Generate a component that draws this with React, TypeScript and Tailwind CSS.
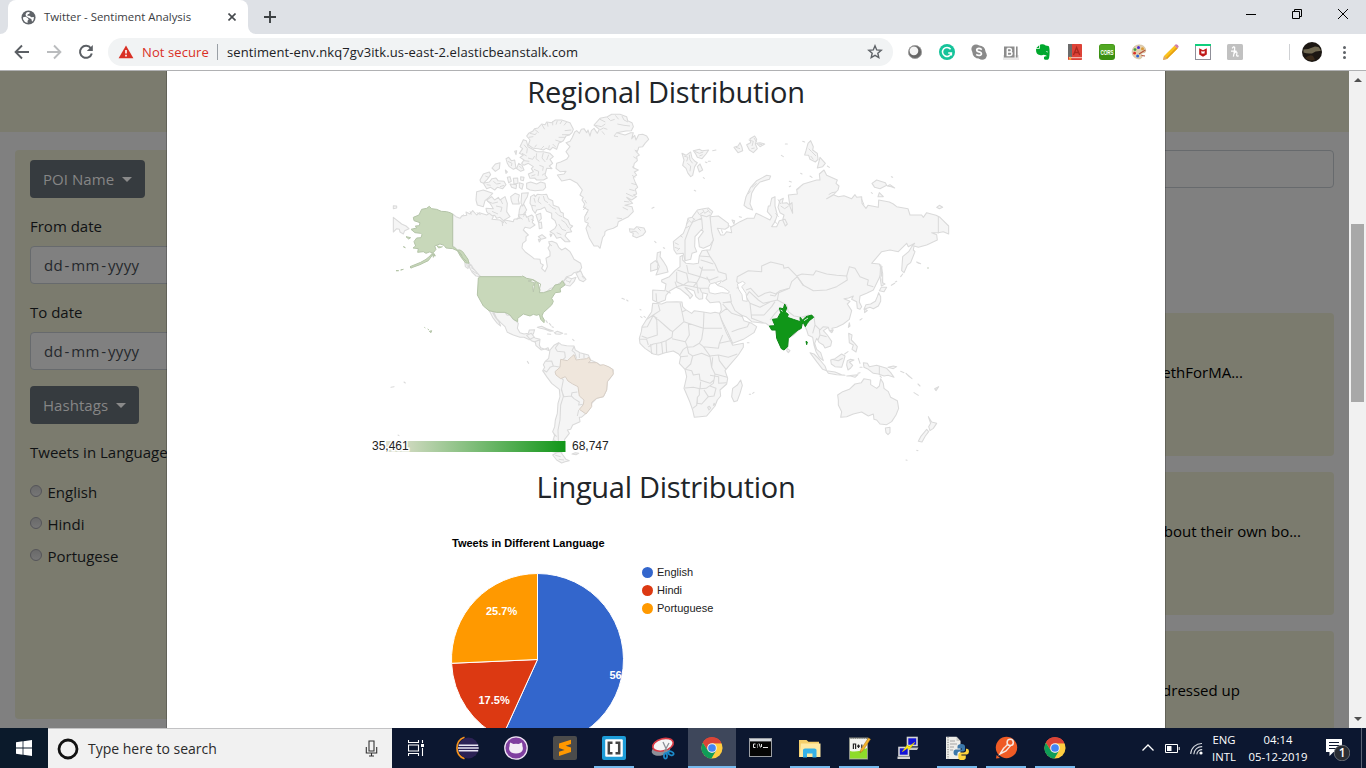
import type { ReactNode } from "react";

/* ---------- small helpers ---------- */

function Svg({ s = 16, box = "0 0 16 16", children }: { s?: number; box?: string; children: ReactNode }) {
  return (
    <svg width={s} height={s} viewBox={box} fill="none" className="block shrink-0">
      {children}
    </svg>
  );
}

function ChromeLogo({ s = 22 }: { s?: number }) {
  return (
    <Svg s={s} box="0 0 24 24">
      <circle cx="12" cy="12" r="11.5" fill="#ffcd40" />
      <path d="M12 12 L2 6.2 A11.5 11.5 0 0 1 22 6.2 L21.7 6.8 H12Z" fill="#db4437" />
      <path d="M12 12 L12 6.8 H22.3 A11.5 11.5 0 0 0 2 6.2 L7.4 14.6Z" fill="#db4437" />
      <path d="M2 6.2 A11.5 11.5 0 0 0 11.4 23.5 L16.5 14.7 L12 17.2 L7.4 14.6Z" fill="#0f9d58" />
      <circle cx="12" cy="12" r="5.3" fill="#f1f1f1" />
      <circle cx="12" cy="12" r="4.2" fill="#4285f4" />
    </Svg>
  );
}

/* ---------- browser chrome ---------- */

function TabStrip() {
  return (
    <div className="flex h-[34px] bg-[#dee1e6] text-[#3c4043]">
      <div className="flex h-full w-2 items-end bg-white">
        <div className="h-full w-2 rounded-br-lg bg-[#dee1e6]" />
      </div>
      <div className="flex w-60 items-center rounded-t-lg bg-white bg-clip-padding pl-[13px] pr-3">
        <Svg s={15}>
          <circle cx="8" cy="8" r="7.5" fill="#5f6368" />
          <path d="M2.2 7.6 L5 7.2 L7.2 8.4 L8.2 10.2 L7 11.4 V13.8 Q3.4 13 2.2 9.8Z M6.2 2.4 L9.2 2.2 L9 4 L7.2 4.6 L6.8 6 L9 6.2 L11 7.8 L13.8 7.4 Q14 10.6 11.8 12.4 L11 9.6 L8.6 8.6 L5.4 6.6 L4.8 4.4Z" fill="#fff" />
        </Svg>
        <div className="ml-2 flex-1 whitespace-nowrap text-[11.4px] leading-4">Twitter - Sentiment Analysis</div>
        <Svg s={8} box="0 0 8 8">
          <path d="M.5 .5 L7.5 7.5 M7.5 .5 L.5 7.5" stroke="#45494d" strokeWidth="1.6" />
        </Svg>
      </div>
      <div className="h-full w-2 bg-white">
        <div className="h-full w-2 rounded-bl-lg bg-[#dee1e6]" />
      </div>
      <div className="ml-2 flex items-center">
        <Svg s={12} box="0 0 12 12">
          <path d="M6 0 V12 M0 6 H12" stroke="#3c4043" strokeWidth="1.9" />
        </Svg>
      </div>
      <div className="ml-auto flex h-7 items-center gap-9 pr-[18px]">
        <Svg s={10} box="0 0 10 10">
          <path d="M0 5.5 H10" stroke="#000" />
        </Svg>
        <Svg s={10} box="0 0 10 10">
          <path d="M.5 2.5 H7.5 V9.5 H.5Z M2.5 2.5 V.5 H9.5 V7.5 H7.5" stroke="#000" />
        </Svg>
        <Svg s={10} box="0 0 10 10">
          <path d="M0 0 L10 10 M10 0 L0 10" stroke="#000" />
        </Svg>
      </div>
    </div>
  );
}

function Extensions() {
  return (
    <div className="ml-[14px] flex items-center gap-4">
      <Svg>
        <circle cx="8" cy="8" r="6.8" fill="#666" />
        <circle cx="6.9" cy="6.8" r="4.4" fill="#f4f4f4" />
        <circle cx="8" cy="8" r="6.5" stroke="#aaa" strokeWidth=".7" />
      </Svg>
      <Svg>
        <circle cx="8" cy="8" r="8" fill="#15c39a" />
        <path d="M11.6 5.2 A4.5 4.5 0 1 0 12.4 8.9 H9.2 M12.4 8.9 V11.4" stroke="#fff" strokeWidth="1.5" />
      </Svg>
      <Svg>
        <circle cx="5" cy="5" r="4.6" fill="#8a8a8a" />
        <circle cx="11.2" cy="11.2" r="4.6" fill="#8a8a8a" />
        <circle cx="8" cy="8" r="6.6" fill="#8a8a8a" />
        <path d="M10.8 5.6 Q8 3.6 5.9 5.2 Q5 7.2 8 7.9 Q11 8.6 10.3 10.5 Q8.6 12.4 5.2 10.4" stroke="#fff" strokeWidth="1.7" />
      </Svg>
      <Svg>
        <path d="M0 11 H16 V16 H0Z" fill="#e9e9e9" />
        <rect x="1" y="2.5" width="10.5" height="11" fill="#8c8c8c" />
        <path d="M4.3 4.5 V11.5 H7.2 Q9 11.3 9 9.7 Q9 8 7.2 8 H4.3 M4.3 4.5 H7 Q8.5 4.7 8.5 6.2 Q8.5 7.8 7 8" stroke="#fff" strokeWidth="1.5" />
        <path d="M13.8 2.5 V13.5" stroke="#8c8c8c" strokeWidth="1.6" />
      </Svg>
      <Svg>
        <path d="M5 .8 Q5.5 0 8 .3 Q10 .8 10.6 1.4 L13.4 2 Q14.6 2.6 14.6 8 Q14.6 15.6 12.6 15.8 L9.8 15.8 Q8.6 14.8 9 13.2 Q9.6 12 11.4 12.4 V11.4 L8.8 10.8 Q7.4 11.6 4.8 11 Q1 10.6 1 5.8 L1.2 4.8 H4.6 Q5.2 4.6 5 .8Z M4.2 1.2 V4 H1.4Z" fill="#00a82d" />
        <path d="M10.8 7.6 Q12 6.7 12.8 7.8 L12.6 8.5Z" fill="#fff" />
      </Svg>
      <Svg>
        <rect x="1" y="0" width="14" height="16" rx=".8" fill="#dd4237" />
        <rect x="1" y="0" width="4" height="13" fill="#6b6b6b" />
        <path d="M2 13.7 H15" stroke="#f7d0c8" strokeWidth="1" />
        <path d="M6.5 11 L9.6 3.5 L12.7 11 M7.5 8.5 H11.7" stroke="#a9281f" strokeWidth="1.3" />
        <path d="M3 12 L4.5 15.6 L2 16Z" fill="#ffb52b" />
      </Svg>
      <Svg>
        <rect width="16" height="16" rx="3" fill="#3a8f12" />
        <rect x=".5" y=".5" width="15" height="8" rx="2.5" fill="#52a823" />
        <text x="1.4" y="10.6" fontFamily="Liberation Sans, Arial, sans-serif" fontSize="7" fontWeight="bold" fill="#fff" textLength="13.2" lengthAdjust="spacingAndGlyphs">
          CORS
        </text>
      </Svg>
      <Svg>
        <path d="M8 .8 Q14.5 1 14.8 7 Q14.6 9 11.6 9 Q9.6 9.4 11 11.4 Q11.6 14.6 8 15 Q1.4 14.2 1 8 Q1.6 1.4 8 .8Z" fill="#e3cfae" stroke="#c2ae8c" strokeWidth=".5" />
        <circle cx="7.5" cy="3.5" r="1.5" fill="#4b2bd0" />
        <circle cx="11.5" cy="4.8" r="1.5" fill="#d99a3a" />
        <circle cx="4" cy="5.6" r="1.4" fill="#3f9e3f" />
        <circle cx="3.6" cy="9.2" r="1.4" fill="#d9342b" />
        <circle cx="6.6" cy="12" r="1.5" fill="#2a62d9" />
        <path d="M8 10 L14.4 6 M10.5 11.5 L14 12" stroke="#b5523b" strokeWidth="1.2" />
      </Svg>
      <Svg>
        <path d="M1 12 L11.6 1.4 L14.6 4.4 L4 15 L0 16Z" fill="#fbc21b" />
        <path d="M3 14 L13.4 3.2 L14.6 4.4 L4 15Z" fill="#e59f15" />
        <path d="M11.4 1.6 L12.8 .3 Q15 0 15.8 2.8 L14.4 4.6Z" fill="#cf7faa" />
        <path d="M1 12 L4 15 L0 16Z" fill="#d7a77a" />
      </Svg>
      <Svg>
        <rect x=".5" y=".5" width="15" height="15" fill="#fff" stroke="#8f8f98" />
        <rect x="0" y="0" width="16" height="2" fill="#10cf7d" />
        <path d="M4.2 4.2 L8 6.2 L11.8 4.2 V10.4 L8 12.8 L4.2 10.4Z" fill="#c01818" />
        <path d="M6.4 6.8 L8 7.8 L9.6 6.8 V9.6 H6.4Z" fill="#fff" />
      </Svg>
      <Svg>
        <rect width="16" height="16" rx="1.5" fill="#c1c1c1" />
        <path d="M5.2 4.4 Q6.6 2 7.6 3.2 Q8 5 6.4 12.6 M4 7 H9.5 M6.8 10 Q8.2 7.6 9.6 8 Q10.4 8.6 9.6 11 Q9.6 12.8 11.6 11.6" stroke="#fff" strokeWidth="1.25" />
      </Svg>
    </div>
  );
}

function Toolbar() {
  return (
    <div className="flex h-[37px] items-center border-b border-[#b0b1b3] bg-white pl-[14px]">
      <Svg>
        <path d="M15 8 H2 M8 1.5 L1.6 8 L8 14.5" stroke="#5b5f64" strokeWidth="1.9" />
      </Svg>
      <div className="ml-4">
        <Svg>
          <path d="M1 8 H14 M8 1.5 L14.4 8 L8 14.5" stroke="#babcbe" strokeWidth="1.9" />
        </Svg>
      </div>
      <div className="ml-4">
        <Svg>
          <path d="M12.9 4.3 A6 6 0 1 0 13.8 9.4" stroke="#5b5f64" strokeWidth="2" />
          <path d="M14.8 1 V7 H8.8Z" fill="#5b5f64" />
        </Svg>
      </div>
      <div className="ml-[14px] flex h-7 w-[785px] items-center rounded-full bg-[#f1f3f4] pl-[10px] pr-[10px]">
        <Svg>
          <path d="M8 1.6 L15.4 14.2 H.6Z" fill="#d93025" />
          <path d="M8 6 V9.6 M8 10.8 V12.4" stroke="#fff" strokeWidth="1.6" />
        </Svg>
        <div className="ml-2 w-[67px] whitespace-nowrap pt-px text-[13px] tracking-[0.1px] text-[#d93025]">Not secure</div>
        <div className="ml-2 h-4 w-px bg-[#9aa0a6]" />
        <div className="ml-[9px] whitespace-nowrap pt-px text-[13px] tracking-[0.11px] text-[#202124]">
          sentiment-env.nkq7gv3itk.us-east-2.elasticbeanstalk.com
        </div>
        <div className="ml-auto">
          <Svg>
            <path d="M8 1.8 L9.7 5.9 L14.2 6.3 L10.8 9.2 L11.8 13.6 L8 11.3 L4.2 13.6 L5.2 9.2 L1.8 6.3 L6.3 5.9Z" stroke="#5f6368" strokeWidth="1.4" />
          </Svg>
        </div>
      </div>
      <Extensions />
      <div className="ml-[46px] h-4 w-px bg-[#cfd1d4]" />
      <div className="ml-3">
        <Svg s={20} box="0 0 20 20">
          <circle cx="10" cy="10" r="10" fill="#1c1713" />
          <path d="M1.5 7.5 Q8 7 13 4.5 L16.5 5 Q18.6 7 18.8 9 Q14 8.6 10 11.4 Q5 12 1.5 10.4Z" fill="#6f6750" />
          <path d="M3 16 Q8 12 11 14 L13 17.5 Q8 20 3 16Z" fill="#3a2a1a" />
        </Svg>
      </div>
      <div className="ml-[21px] flex flex-col gap-[2px]">
        <div className="h-[3px] w-[3px] rounded-full bg-[#5f6368]" />
        <div className="h-[3px] w-[3px] rounded-full bg-[#5f6368]" />
        <div className="h-[3px] w-[3px] rounded-full bg-[#5f6368]" />
      </div>
    </div>
  );
}

/* ---------- dimmed page ---------- */

function DropButton({ label }: { label: string }) {
  return (
    <div className="flex h-[38px] w-fit items-center rounded bg-[#363b3f] px-[13px] text-[15px] tracking-[0.05px] text-[#868686]">
      {label}
      <div className="ml-2 border-x-[5px] border-t-[5px] border-x-transparent border-t-[#8a8a8a]" />
    </div>
  );
}

function DateField({ label }: { label: string }) {
  return (
    <div>
      <div className="leading-6">{label}</div>
      <div className="mt-2 flex h-[38px] items-center gap-[1.5px] rounded border border-[#676a6d] bg-[#808080] pl-[13px] text-[15px] tracking-[0.35px] text-[#25282c]">
        <span>dd</span>
        <span>-</span>
        <span>mm</span>
        <span>-</span>
        <span>yyyy</span>
      </div>
    </div>
  );
}

function Sidebar() {
  return (
    <div className="mt-[18px] ml-[15px] flex h-[569px] w-[330px] flex-col rounded bg-[#7b7b6e] px-[15px] pt-[10px]">
      <DropButton label="POI Name" />
      <div className="mt-4">
        <DateField label="From date" />
      </div>
      <div className="mt-4">
        <DateField label="To date" />
      </div>
      <div className="mt-4">
        <DropButton label="Hashtags" />
      </div>
      <div className="mt-4 leading-6">Tweets in Language</div>
      <div className="mt-4 flex flex-col gap-2">
        {["English", "Hindi", "Portugese"].map((name) => (
          <div key={name} className="flex h-6 items-center">
            <div className="mb-[3px] h-3 w-3 rounded-full border border-[#55555a] bg-gradient-to-b from-[#6a6a6a] to-[#767676]" />
            <div className="ml-[5.5px]">{name}</div>
          </div>
        ))}
      </div>
    </div>
  );
}

function TweetCard({ children }: { children: ReactNode }) {
  return <div className="flex h-[143px] shrink-0 justify-end rounded bg-[#7b7b6e] pt-[47px] leading-6">{children}</div>;
}

function Results() {
  return (
    <div className="mt-[18px] mr-[15px] ml-auto flex w-[900px] flex-col overflow-hidden">
      <div className="h-[38px] shrink-0 rounded border border-[#676a6d]" />
      <div className="mt-[125px] flex flex-col gap-4 whitespace-nowrap text-black">
        <TweetCard>
          <div className="pr-[91px]">ethForMA...</div>
        </TweetCard>
        <TweetCard>
          <div className="pr-[33px]">bout their own bo...</div>
        </TweetCard>
        <TweetCard>
          <div className="pr-[94px]">dressed up</div>
        </TweetCard>
      </div>
    </div>
  );
}

/* ---------- world map ---------- */

const LAND = "#f5f5f5";
const EDGE = "#dadada";

const northWest = [
  "M610 105L614 96L620 92L628 100L634 88L642 86L650 98L654 90L660 108L664 92L672 85L682 100L688 88L672 75L690 55L712 50L725 43L750 43L770 50L773 62L786 68L790 80L784 92L768 93L740 98L765 105L782 98L790 98L785 116L794 106L798 120L806 104L818 103L830 108L836 118L825 130L818 140L806 142L804 150L798 154L808 165L800 170L802 182L793 190L790 203L805 210L793 216L800 225L790 232L795 245L803 262L796 268L800 282L790 285L800 290L785 300L770 292L788 310L765 316L786 320L790 335L775 350L745 365L742 378L730 385L712 390L705 395L704 405L698 412L690 445L684 438L672 438L658 415L648 385L655 370L645 365L644 350L655 330L640 322L644 312L636 300L640 292L630 285L637 270L622 250L600 238L575 243L562 225L582 222L588 214L570 215L558 205L560 190L572 186L590 178L597 168L588 155L600 140L588 128L600 124L606 114Z",
  "M470 108L476 100L488 94L494 86L504 84L515 72L525 74L530 66L545 68L556 60L575 60L600 68L610 88L606 98L598 105L588 108L580 122L566 130L560 148L548 142L540 150L528 145L520 150L505 146L490 145L475 135L480 120Z",
  "M455 130L460 119L469 122L474 140L488 148L500 155L520 155L540 160L550 170L540 178L548 190L538 198L546 206L530 205L525 225L532 234L520 240L500 240L494 234L480 235L475 222L490 215L484 206L490 200L475 190L462 196L455 190L462 180L450 172L460 165L448 160L458 146L450 140Z",
  "M470 250L482 246L500 252L512 246L525 250L527 262L520 270L495 272L480 270L470 265Z",
  "M452 230L462 232L460 242L452 240ZM448 248L460 252L456 268L448 262ZM430 235L443 234L444 250L432 252ZM412 232L420 230L424 244L416 248ZM420 252L440 254L438 266L425 262ZM408 176L416 172L424 182L434 180L438 204L430 208L418 200L412 190ZM446 190L456 196L462 210L452 214L440 206ZM434 154L440 152L438 164ZM406 210L412 216L408 220Z",
  "M330 240L340 222L358 216L362 224L352 238L340 250L332 246ZM340 250L358 246L366 236L378 234L384 242L402 244L408 254L398 266L382 262L374 270L362 262L350 266ZM366 204L376 192L390 188L388 206L376 214Z",
  "M320 275L340 270L368 280L355 294L345 302L340 320L322 315L318 300Z",
  "M350 300L365 290L374 300L385 292L390 300L405 290L412 310L410 335L420 350L400 362L390 352L380 355L374 346L362 348L350 335L348 325L370 326L360 310Z",
  "M422 290L435 280L448 285L445 300L448 312L428 312L424 302ZM455 280L475 278L472 290L466 300L458 318L453 310ZM452 318L462 314L470 330L458 346L446 350L448 330Z",
  "M480 310L482 290L492 284L496 290L502 283L516 284L530 283L535 296L548 302L550 316L566 322L572 336L580 340L580 352L594 360L600 374L608 378L600 386L605 395L590 398L585 408L600 425L585 425L572 412L560 415L552 402L540 395L555 385L560 376L555 362L545 354L545 340L530 334L524 322L512 328L500 330L496 340L488 330L485 318Z",
  "M505 410L516 404L528 414L514 418ZM505 418L512 420L508 426ZM540 402L546 404L542 410ZM498 345L512 340L514 356L505 366ZM506 368L514 366L516 384L508 386Z",
  "M248 342L258 350L270 355L276 348L290 346L288 336L300 342L308 332L320 345L328 338L350 345L358 340L370 350L366 358L390 360L400 368L404 360L430 365L432 358L450 355L445 345L466 343L470 352L485 345L490 350L487 368L495 375L480 385L465 382L460 390L475 405L468 410L468 422L458 430L456 444L466 456L485 470L492 476L510 478L512 490L520 495L515 505L525 515L532 500L528 475L540 468L540 455L534 444L540 435L536 425L546 424L560 430L566 442L575 450L586 444L600 455L606 466L612 478L632 490L635 503L628 514L612 518L604 526L590 530L580 545L570 548L555 560L540 566L528 577L510 584L505 560L480 540L455 530L325 530L310 512L305 496L292 490L270 455L248 442Z",
  "M618 520L632 512L638 526L648 538L640 545L628 540ZM580 545L592 532L605 536L618 532L612 545L600 558L588 556Z",
  "M70 352L95 372L108 378L117 386L104 392L100 402L90 396L88 388L80 386L70 396ZM70 317L80 318L80 324L70 326Z",
  "M300 492L310 505L326 524L332 530L318 528L306 516L298 502ZM284 482L298 488L294 506L286 500Z",
  "M778 386L792 388L800 380L822 384L827 395L818 406L800 413L788 408L790 400L780 396ZM846 325L852 322ZM854 424L858 428ZM880 443L884 445Z",
];

/* fjords and inlets of the arctic coasts */
const fjords =
  "M476 112L490 110M480 100L496 104L500 98M494 88L506 98M516 74L524 88M532 68L534 80M548 64L548 76M562 62L558 74M576 62L570 72M590 66L582 76M604 90L584 92M598 104L576 104M586 112L566 112M574 126L556 120M558 142L548 132M536 146L538 136M514 146L522 138M494 142L500 134M462 134L472 146L470 160M456 160L470 168M462 182L478 184M474 174L488 178L494 168M500 160L498 176L508 184M520 158L516 174L526 186M536 164L530 180M508 196L520 200L518 212M492 208L506 214L504 228M516 226L524 220M484 228L496 224M690 58L706 66M712 52L722 62L734 58M676 76L694 80L706 72M690 90L700 84L712 88M736 46L746 58M756 48L762 60L774 66M742 72L762 76L780 78M740 98L732 108L744 110M696 94L704 104M794 150L804 156M790 170L800 176M786 200L796 206M786 226L796 232M784 250L798 254M778 268L794 272M768 280L790 290M762 304L778 306M758 322L774 330M740 354L756 356M644 300L650 310M648 320L640 330M652 336L646 348M656 352L650 362M654 376L662 384M352 304L368 310L384 306M378 318L396 322L392 336M366 334L384 342M392 300L398 312M492 294L496 308M508 290L504 304L514 312M520 288L524 302L534 308M486 316L498 318M536 312L546 322L558 328M556 336L566 346L576 350M574 360L586 368L596 384M566 372L576 388L588 392M560 398L574 404M396 362L398 378M404 364L410 372M440 360L446 350L458 358M460 350L468 336M474 352L478 366M484 358L492 362M536 430L546 438M346 228L356 232M350 254L362 256M370 244L380 252L392 250M390 260L402 256M414 184L426 190L424 198M448 198L456 206M272 350L282 344M300 334L304 344M320 338L332 344M302 502L314 510M306 512L322 522M290 488L292 500M636 528L642 536M588 542L600 546M604 538L598 550M784 394L798 394L806 402M804 384L812 392";

const alaska =
  "M248 342L240 338L230 335L214 334L200 328L185 326L178 319L170 325L155 328L147 345L130 352L132 362L150 368L148 377L136 378L140 384L123 388L135 398L152 400L156 404L153 413L140 414L132 425L137 438L129 444L145 446L143 457L160 455L168 460L178 456L188 458L180 468L168 478L152 487L120 500L125 503L150 494L162 488L175 482L188 464L196 468L190 458L198 448L194 438L210 432L222 436L228 444L248 446L262 452L272 470L286 488L297 490L294 478L278 455L270 450L262 450L254 442L248 440ZM108 410L122 413L116 417ZM100 440L106 443ZM120 502L124 504ZM92 510L100 508ZM78 512L86 512ZM188 462L194 464L190 472ZM268 456L280 476L290 484M262 450L276 466M200 436L206 444L218 440";

const southWest = [
  "M357 92L380 97L388 95L405 97L412 106L420 105L430 118L440 125L445 130L442 145L450 158L462 162L475 160L478 150L494 149L490 162L476 166L484 172L475 178L462 172L450 172L430 165L412 157L405 140L392 128L380 115L372 98L368 98L376 112L386 124L392 138L382 130L368 112L362 100Z",
  "M470 166L484 160L495 174L510 178L508 195L512 203L524 208L534 203L538 212L525 207L514 210L498 197L496 187L484 182Z M476 180L492 172M492 186L508 180",
  "M502 142L515 139L530 146L550 153L540 154L525 148L508 144ZM553 158L562 154L578 160L570 163L558 162ZM532 162L542 163ZM584 162L590 162ZM528 122L532 128ZM538 130L543 136ZM546 140L550 142ZM608 178L612 182ZM472 244L476 250ZM63 322L72 320ZM102 306L106 309ZM84 465L87 467ZM756 55L763 58ZM770 60L774 63ZM810 88L813 90ZM812 110L816 113ZM822 109L826 112Z",
  "M540 210L552 196L566 188L574 194L590 197L612 198L616 210L630 218L655 225L662 240L680 248L690 255L715 260L730 270L728 285L712 305L710 330L700 350L680 355L665 370L660 385L648 400L634 412L628 412L630 425L608 435L602 448L592 450L598 460L584 478L580 510L574 520L566 518L548 515L553 490L548 486L554 465L548 455L554 440L556 420L562 400L564 370L570 350L568 328L545 310L530 290L518 272L524 262L520 254L525 245L536 235Z",
  "M560 518L572 516L588 538L598 542L585 545L575 549L560 540L548 525ZM606 522L616 518L626 520L618 524Z",
  "M566 190L556 204L562 214L584 216L586 232L578 240L572 262L550 258L545 243L526 244M550 258L540 262L530 276L520 270M612 200L606 212L614 218L620 236M628 220L628 234M642 222L642 234M572 292L580 300L574 330L582 350L604 348L606 338L622 336M604 348L612 356L628 366L626 375L640 373M575 328L580 350L572 375L570 420L564 450L566 510M626 390L622 408M552 462L560 470M552 480L562 486M552 500L562 506M554 510L566 516M556 526L572 530M566 538L582 540",
];

const brazil =
  "M555 275L570 262L572 238L592 242L605 230L612 224L618 240L632 238L650 236L656 232L662 242L655 248L680 248L690 256L700 254L715 260L728 268L730 282L712 305L710 330L700 350L680 355L665 367L665 380L648 402L628 388L640 374L642 360L628 348L624 320L608 312L594 303L586 290L572 296L558 285Z";

const usa =
  "M325 -6L330 -10L455 -10L458 -12L470 -5L490 -1L504 8L510 30L508 38L520 38L545 30L555 15L570 12L577 2L585 15L570 26L572 36L556 38L545 55L550 64L545 75L520 98L516 108L523 120L522 128L512 118L508 103L500 106L490 103L480 108L460 102L443 115L443 125L430 118L420 105L405 97L380 97L357 92L340 78L330 60L322 45Z";

const eurasia =
  "M150 450L158 425L160 420L152 395L150 350L175 348L205 370L205 382L195 388L172 385L182 405L192 405L200 395L215 398L212 382L222 376L240 365L262 355L282 355L288 340L300 345L330 360L335 350L322 335L325 318L330 318L335 295L345 290L345 318L352 345L345 365L335 380L350 380L358 362L375 358L382 372L376 378L368 360L372 345L360 338L354 322L360 300L370 295L366 310L380 308L388 315L396 308L398 340L390 320L385 285L412 282L410 268L430 252L450 246L470 240L480 240L478 222L492 210L500 226L532 240L528 250L537 258L534 270L520 285L500 296L520 284L535 290L552 287L575 296L585 284L590 292L605 290L606 310L618 325L624 316L655 322L656 300L688 306L700 312L710 320L744 326L750 345L785 345L790 352L800 338L828 346L840 352L866 378L866 402L850 395L835 398L815 398L830 404L832 420L800 435L775 442L762 438L760 450L765 455L752 488L742 495L732 518L725 512L728 470L746 455L755 440L764 430L745 440L740 430L715 455L690 450L665 455L635 490L658 492L665 510L662 525L640 570L620 580L600 588L598 606L605 620L600 628L592 625L590 605L575 598L580 588L566 594L552 596L570 604L562 612L575 632L568 658L550 672L530 682L516 685L518 696L508 692L505 682L490 692L502 705L515 724L512 738L495 744L490 735L478 728L470 715L464 730L470 748L482 758L490 782L478 772L468 755L462 735L458 712L445 706L440 690L430 670L422 685L400 705L385 716L383 740L372 750L360 735L350 710L348 690L335 690L328 678L318 670L300 668L275 665L258 650L245 646L252 662L275 670L290 680L282 698L250 718L218 730L204 698L186 662L177 644L184 630L182 612L178 605L150 608L138 595L143 582L128 578L128 596L118 598L108 590L102 572L75 562L98 586L90 596L86 588L62 568L48 562L30 572L18 586L16 600L-5 608L-12 605L-22 600L-22 570L15 572L18 552L5 545L5 540L28 530L45 512L60 500L60 470L68 466L68 480L78 490L100 492L115 490L118 468L126 452L140 450Z";

const northEast = [
  eurasia,
  "M75 482L70 460L50 462L42 450L40 425L48 418L70 400L78 380L84 355L96 352L112 330L130 326L145 324L158 335L150 350L155 395L160 420L150 436L130 445L118 440L115 415L130 395L125 388L105 410L104 440L110 455L96 460L92 478Z",
  "M252 316L258 290L272 262L290 242L320 226L332 228L328 238L300 246L285 262L275 280L270 312L278 330L262 324Z",
  "M66 160L78 166L92 156L96 174L105 184L112 188L104 200L98 226L92 230L84 220L78 205L68 196L72 180ZM100 152L118 148L126 152L146 150L138 162L126 176L112 172L106 160ZM112 200L120 192L128 210L118 216Z",
  "M222 142L234 138L240 128L246 142L248 152L234 158ZM260 134L272 128L270 116L284 108L290 118L286 132L292 146L280 158L268 150ZM290 130L300 128L314 132L300 140ZM158 152L168 150ZM136 186L141 188ZM145 184L151 184ZM130 233L133 235ZM103 271L107 273ZM376 132L382 132ZM364 166L370 170ZM428 124L434 126Z",
  "M438 152L444 130L452 122L460 140L458 150L472 160L474 178L466 186L450 178L446 166L434 165ZM472 204L480 172L496 190L488 200ZM502 198L508 202ZM422 220L426 222ZM388 244L394 246ZM388 260L392 258ZM450 228L456 232Z",
  "M636 250L650 240L676 248L680 256L660 266L644 262ZM682 258L694 260L704 264L690 254ZM654 290L658 278L670 290ZM634 278L637 280ZM694 230L698 232ZM830 322L838 316L848 322L838 326Z",
  "M770 486L776 490L782 491ZM662 494L668 520L668 548L675 552L664 558L660 530ZM694 556L704 550ZM706 546L710 544ZM722 530L728 522ZM216 360L224 362L222 372ZM238 350L244 352Z",
  "M-8 458L2 455L0 470L10 484L20 500L24 516L0 522L-12 525L-6 510L-2 500L-10 480ZM-28 492L-14 482L-6 490L-8 508L-28 514Z",
  "M664 562L680 562L672 575L658 572ZM656 578L662 590L662 604L655 618L640 626L630 622L612 628L618 614L632 612L646 604L652 590ZM614 626L622 632L614 638Z",
  /* national borders */
  "M75 482L75 420L90 380L98 366L125 355L128 388M125 355L122 345L140 350L150 345M835 350L835 400M230 565L242 555L230 545L232 530L265 512L305 515L305 498L332 486L370 495L372 505L385 502L412 530L395 545L388 565L360 572L348 582L330 576L315 580L295 590L272 565L258 570M410 528L426 522L460 525L468 512L500 522L530 526L560 528L562 540L530 560L500 570L460 572L430 556L410 528M560 528L568 500L585 505L600 530L625 540L622 555L640 560",
  "M412 530L430 556M388 565L356 578L352 600L380 615L385 635L402 648L425 652L445 645L462 650L465 675L480 690L490 680L505 682M352 600L330 605L310 610L295 600L268 575M268 575L258 590L270 610L300 622L330 606M330 585L345 588L352 578M270 610L275 655L310 668M275 645L312 645L335 620L345 605M212 605L225 632L248 648M190 608L212 605M188 612L200 625L180 640M200 625L215 640L248 650M215 695L235 688L262 680L268 668M465 675L458 700M478 690L480 705L500 710M480 705L474 720M330 660L345 640L362 622",
  "M140 450L150 470L165 492L175 515L198 522L200 538L186 545M50 515L50 545L70 555L85 545L80 520L52 510M80 495L85 520L120 530L128 500M118 468L150 470M122 480L140 485L160 492M118 500L128 510L165 510M120 530L150 540L175 530M85 545L110 548L120 530M70 555L100 560L110 548M100 560L120 565L150 565M110 548L115 580M120 565L125 578M45 545L50 560L70 555M18 572L32 580M-12 580L-10 605M140 530L150 548M210 582L214 605L188 608",
];

/* norwegian and siberian inlets, svalbard and franz josef detail */
const inlets =
  "M44 428L56 434M44 442L56 446M52 452L60 444M60 406L68 412M78 384L88 378M84 358L94 368L104 356M96 352L106 360M112 334L118 344L130 336M128 328L134 340L146 332M142 328L152 340M86 364L80 372M72 168L84 172L80 184M88 164L90 180L98 190M82 190L92 198L90 214M104 154L118 160L130 156M118 168L128 164M228 142L240 146M266 120L280 124L276 138M274 146L284 144M282 114L290 126M296 132L306 134M354 298L362 312M362 318L374 326L386 318M346 340L356 350M342 362L352 372M184 388L188 400M206 376L214 382M412 270L420 262M446 146L454 154L468 168M452 168L460 178M264 282L272 272M276 262L290 250M506 284L516 278L528 276M604 296L612 314M666 498L664 530M666 536L668 550";

const seas = [
  "M146 562L150 552L165 548L172 556L190 562L208 575L205 580L185 578L165 582L148 578Z",
  "M232 552L248 544L256 550L245 560L258 580L262 604L248 602L246 584L236 568Z",
  "M166 548L184 542L180 550L172 554Z",
];

const southEast = [
  "M-22 70L5 72L20 66L50 65L66 66L68 80L76 88L95 100L103 92L130 96L152 100L165 97L178 100L186 125L200 160L213 185L218 196L250 190L250 202L235 225L205 260L195 272L203 295L200 312L180 330L182 348L172 360L165 378L140 408L120 410L103 412L98 390L88 362L72 325L80 290L75 268L58 250L62 230L56 222L40 213L15 218L-5 225L-20 222L-45 205L-60 190L-62 175L-56 155L-54 140L-40 118L-25 95Z",
  "M242 300L247 316L240 340L232 362L222 365L215 350L218 325L232 315Z",
  "M382 205L390 212L385 218L380 212ZM262 188L267 188ZM268 343L272 343ZM278 340L282 337Z",
  "M535 360L533 345L548 335L568 328L585 312L604 308L612 296L632 300L632 314L650 325L658 318L662 296L670 310L672 325L685 335L692 352L712 362L716 385L708 405L695 425L680 434L660 432L650 420L642 418L640 402L625 408L605 396L580 402L560 410L542 412L545 395L535 375Z",
  "M676 444L690 442L690 458L684 464L678 458ZM805 410L815 426L830 430L820 445L810 452L806 440L812 430ZM800 448L806 455L796 468L786 486L775 484L782 470L792 458ZM770 511L774 512ZM738 540L741 541Z",
  "M450 218L462 222L480 240L495 258L500 272L488 268L470 245ZM500 272L525 276L545 284L555 286L530 284L505 280ZM560 288L572 288L585 292L594 284L578 286ZM512 240L525 236L545 222L555 228L552 240L545 262L525 260L514 252ZM562 242L572 238L582 240L568 246L578 256L572 264L564 270L560 255ZM566 160L576 165L574 180L584 190L592 200L588 216L576 208L580 195L568 188ZM564 215L554 222ZM595 235L600 250ZM600 262L606 262ZM568 128L570 138L565 142ZM520 150L510 152L514 158Z",
  "M610 248L622 250L628 260L650 256L680 265L692 278L702 292L684 286L672 288L655 282L640 280L625 268L612 262ZM684 262L700 266L710 260L700 258ZM722 274L732 278ZM738 280L746 288L756 296ZM774 312L780 318ZM762 338L775 346ZM824 326L836 320L828 332ZM660 288L664 292ZM600 120L606 116ZM594 280L600 278Z",
  /* borders */
  "M-5 74L0 92L-20 105L-40 118M-20 105L-10 120M-54 142L-38 140L-20 106L30 150L38 155L72 125L66 96L60 68M-10 112L-8 165L-38 175L-55 168M38 155L36 172L18 182L0 188L-20 192L-35 200M66 96L78 90M72 125L85 130L130 145L132 96M130 145L186 145M85 130L88 165L76 185L36 176M76 185L82 200L70 208L60 224M130 145L125 178L118 190L130 200L175 205L178 190L188 165M118 190L100 200L82 202M82 202L86 220L98 228L125 220L150 230M62 230L84 228M130 200L150 228L175 225L205 232L232 222M178 190L212 182M175 225L178 242L198 268M158 232L155 262L165 282L202 292M150 230L155 262M98 228L92 252L75 268M75 268L95 272L100 285L118 282L120 300L150 310L162 300L165 282M75 324L100 322L120 326L122 305M120 326L138 325L160 310L162 300M118 328L118 345L112 352L112 370L125 372L145 350L132 330M145 350L162 348L168 325L150 318M112 352L110 376L98 385M150 286L176 290L176 310L200 308M-60 178L-40 178L-35 195M-28 192L-25 222M-10 190L-10 222M5 188L8 220M18 184L20 218M658 258L658 282M515 238L535 242L548 235",
  "M143 382L148 379L152 384L147 390ZM162 370L166 374L160 376Z",
];

const india =
  "M374 72L380 84L376 96L385 103L382 112L400 118L421 125L420 112L428 120L438 110L455 105L461 112L448 122L442 130L436 140L430 128L426 132L424 145L414 150L385 175L383 200L372 210L364 206L350 175L348 150L335 150L328 138L345 137L337 118L352 116L362 98L358 84L370 86ZM438 184L442 186L440 194Z";

function Shapes({ x, y, paths }: { x: number; y: number; paths: string[] }) {
  return (
    <g transform={`translate(${x} ${y}) scale(0.33333)`} fill={LAND} stroke={EDGE} strokeWidth="3.2" strokeLinejoin="round">
      {paths.map((d) => (
        <path key={d} d={d} fill={/^M(75 482L75|412 530|140 450|-5 74|566 190)/.test(d) ? "none" : LAND} />
      ))}
    </g>
  );
}

function WorldMap() {
  return (
    <svg width="600" height="356" viewBox="370 110 600 356" className="block">
      <defs>
        <linearGradient id="scale" x1="372" x2="566" y1="0" y2="0" gradientUnits="userSpaceOnUse">
          <stop offset="0" stopColor="#efe6dc" />
          <stop offset=".2" stopColor="#c9d7ba" />
          <stop offset="1" stopColor="#109618" />
        </linearGradient>
      </defs>
      <Shapes x={660} y={100} paths={northEast} />
      <g transform="translate(660 100) scale(0.33333)" fill="#fff" stroke={EDGE} strokeWidth="3">
        {seas.map((d) => (
          <path key={d} d={d} />
        ))}
        <path d={inlets} fill="none" />
      </g>
      <Shapes x={660} y={280} paths={southEast} />
      <Shapes x={370} y={100} paths={northWest} />
      <path transform="translate(370 100) scale(0.33333)" d={fjords} fill="none" stroke={EDGE} strokeWidth="3" />
      <Shapes x={370} y={280} paths={southWest} />
      <path transform="translate(370 100) scale(0.33333)" d={alaska} fill="#c8d8ba" stroke="#b4c4a8" strokeWidth="3" />
      <g transform="translate(370 280) scale(0.33333)" strokeWidth="3" strokeLinejoin="round">
        <path d={usa} fill="#c8d8ba" stroke="#b4c4a8" />
        <path d="M474 3L488 0L498 6L494 12L490 36L488 20L494 8ZM504 8L512 12L508 28Z" fill="#fff" stroke="#b9c6ae" />
        <path d="M163 142L166 144M173 147L177 150M178 154L185 152L183 158Z" fill="#c8d8ba" stroke="#b4c4a8" />
        <path d={brazil} fill="#efe6dc" stroke="#d8cfc6" />
      </g>
      <path transform="translate(660 280) scale(0.33333)" d={india} fill="#109618" stroke="#0e8716" strokeWidth="3" />
      <path transform="translate(660 280) scale(0.33333)" d="M362 90L368 94M432 122L444 114" stroke="#dce8dc" strokeWidth="3" />
      <circle cx="928" cy="268" r=".8" fill="#c0c8b8" />
      <rect x="386" y="441" width="179.5" height="11" fill="url(#scale)" />
      <g fontFamily="Liberation Sans, Arial, sans-serif" fontSize="12" fill="#222">
        <text x="372" y="450" stroke="#fff" strokeWidth="3" paintOrder="stroke">
          35,461
        </text>
        <text x="572" y="450">68,747</text>
      </g>
    </svg>
  );
}

/* ---------- pie chart ---------- */

const slices = [
  { name: "English", share: 0.568, color: "#3366cc", dot: "bg-[#3366cc]" },
  { name: "Hindi", share: 0.175, color: "#dc3912", dot: "bg-[#dc3912]" },
  { name: "Portuguese", share: 0.257, color: "#ff9900", dot: "bg-[#ff9900]" },
];

function Pie() {
  const r = 86;
  let turn = 0;
  return (
    <svg width="173" height="173" viewBox="-86.5 -86.5 173 173" className="block overflow-visible">
      {slices.map((s) => {
        const a = turn * 2 * Math.PI;
        turn += s.share;
        const b = turn * 2 * Math.PI;
        return (
          <path
            key={s.name}
            d={`M0 0L${r * Math.sin(a)} ${-r * Math.cos(a)}A${r} ${r} 0 ${s.share > 0.5 ? 1 : 0} 1 ${r * Math.sin(b)} ${-r * Math.cos(b)}Z`}
            fill={s.color}
            stroke="#fff"
          />
        );
      })}
      <g fontFamily="Liberation Sans, Arial, sans-serif" fontSize="11" fontWeight="bold" fill="#fff">
        <text x="-51.5" y="-45">25.7%</text>
        <text x="-59" y="44">17.5%</text>
        <text x="72" y="19">56.8%</text>
      </g>
    </svg>
  );
}

function Modal() {
  return (
    <div className="absolute top-0 bottom-0 left-[166px] flex w-[1000px] flex-col overflow-hidden border-x border-black/20 bg-white bg-clip-padding">
      <h2 className="mt-[2px] text-center text-[29px] leading-[38px] tracking-[-0.3px] text-[#212529]">Regional Distribution</h2>
      <div className="-mt-px ml-[203px]">
        <WorldMap />
      </div>
      <h2 className="mt-[2px] text-center text-[29px] leading-[38px] tracking-[-0.3px] text-[#212529]">Lingual Distribution</h2>
      <div className="mt-[29px] ml-[285px] font-['Liberation_Sans'] text-[11px] font-bold leading-4 text-black">
        Tweets in Different Language
      </div>
      <div className="ml-[284px] flex">
        <div className="mt-[22px]">
          <Pie />
        </div>
        <div className="mt-[13px] ml-[18px] flex flex-col gap-[2px] font-['Liberation_Sans'] text-[11px] leading-4 text-[#222]">
          {slices.map((s) => (
            <div key={s.name} className="flex items-center gap-1">
              <div className={`h-[11px] w-[11px] rounded-full ${s.dot}`} />
              {s.name}
            </div>
          ))}
        </div>
      </div>
    </div>
  );
}

function Page() {
  return (
    <div className="relative flex h-[657px] overflow-hidden bg-[#808080]">
      <div className="flex w-[1349px] flex-col text-[15px] text-[#101214]">
        <div className="h-[61px] shrink-0 bg-[#7b7b6e]" />
        <div className="flex min-h-0 flex-1">
          <Sidebar />
          <Results />
        </div>
      </div>
      <div className="flex w-[17px] flex-col items-center bg-[#f1f1f1]">
        <div className="mt-[7px] border-x-[4px] border-b-[4px] border-x-transparent border-b-[#505050]" />
        <div className="mt-[142px] h-[178px] w-[13px] bg-[#a8a8a8]" />
        <div className="mt-auto mb-[7px] border-x-[4px] border-t-[4px] border-x-transparent border-t-[#505050]" />
      </div>
      <Modal />
    </div>
  );
}

/* ---------- taskbar ---------- */

function Task({ open, active, children }: { open?: boolean; active?: boolean; children: ReactNode }) {
  return (
    <div className={`flex h-10 w-12 flex-col items-center ${active ? "bg-[#3e475b]" : ""}`}>
      <div className="flex h-[38px] items-center pt-[2px]">{children}</div>
      <div className={`h-[2px] ${active ? "w-12 bg-[#76b9ed]" : open ? "w-10 bg-[#76b9ed]" : "w-10"}`} />
    </div>
  );
}

function Taskbar() {
  return (
    <div className="flex h-10 bg-[#0c1730] text-white">
      <div className="flex w-12 items-center justify-center bg-[#0b1a2b]">
        <Svg>
          <path d="M0 2.2 L6.6 1.3 V7.6 H0Z M7.4 1.2 L16 0 V7.6 H7.4Z M0 8.4 H6.6 V14.7 L0 13.8Z M7.4 8.4 H16 V16 L7.4 14.8Z" fill="#fff" />
        </Svg>
      </div>
      <div className="flex w-[344px] items-center border-t border-[#c2c2c4] bg-[#f1f1f1] pl-[9px] pr-[12px]">
        <Svg s={22} box="0 0 22 22">
          <circle cx="11" cy="11" r="9" stroke="#111" strokeWidth="2.8" />
        </Svg>
        <div className="ml-[9px] flex-1 whitespace-nowrap text-[14px] leading-5 text-[#2b2b2b]">Type here to search</div>
        <Svg s={17} box="-2.5 -.5 17 17">
          <path d="M3.5 .5 H8.5 V10.5 H3.5Z M.8 6.5 V12.5 H11.2 V6.5 M6 12.5 V15.5 M3.5 15.5 H8.5" stroke="#333" strokeWidth="1.1" />
        </Svg>
      </div>
      <Task>
        <Svg>
          <path d="M.5 0 V2.5 H10.5 V0 M.5 5 H10.5 V11 H.5Z M.5 16 V13.5 H10.5 V16 M14.5 0 V3 M14.5 8 V16" stroke="#fff" strokeWidth="1.1" />
          <rect x="13" y="4" width="3" height="3" fill="#fff" />
        </Svg>
      </Task>
      <div className="ml-[3px] flex gap-px">
        <Task>
          <Svg s={24} box="0 0 24 24">
            <path d="M9.5 1.2 A11.5 11.5 0 0 0 9.5 22.8" stroke="#f7941e" strokeWidth="1.7" />
            <circle cx="13.4" cy="12" r="10.4" fill="#2c2255" />
            <path d="M3.6 9.2 H23.2 M3 12 H23.7 M3.6 14.8 H23.2" stroke="#e9e6f4" strokeWidth="1.5" />
          </Svg>
        </Task>
        <Task>
          <Svg s={24} box="0 0 24 24">
            <circle cx="12" cy="12" r="11.2" fill="#8040a0" stroke="#eee4f2" strokeWidth="1.3" />
            <path d="M6.2 6.5 L9.4 8 Q12 7.4 14.6 8 L17.8 6.5 Q18.6 8.6 18.4 10 Q20 14 16.6 16.6 Q12 18.4 7.4 16.6 Q4 14 5.6 10 Q5.4 8.6 6.2 6.5Z" fill="#f4eef6" />
          </Svg>
        </Task>
        <Task>
          <Svg s={24} box="0 0 24 24">
            <rect width="24" height="24" rx="2" fill="#4b4b4b" />
            <path d="M6 7.4 L18 3.8 V8 L12.6 9.8 L18 11.6 V16 L6 20 V15.8 L11.6 14 L6 12.1Z" fill="#ff9800" />
          </Svg>
        </Task>
        <Task open>
          <Svg s={24} box="0 0 24 24">
            <rect width="24" height="24" rx="2" fill="#1d9cd8" />
            <rect x="3.2" y="3.2" width="17.6" height="17.6" rx="1" fill="#fff" />
            <path d="M10.5 6.8 H6.8 V17.2 H10.5 M13.5 6.8 H17.2 V17.2 H13.5" stroke="#444" strokeWidth="2.5" />
          </Svg>
        </Task>
        <Task>
          <Svg s={24} box="0 0 24 24">
            <ellipse cx="10" cy="14" rx="9.5" ry="5.5" transform="rotate(-15 10 14)" fill="#8c8f98" />
            <ellipse cx="12" cy="8.8" rx="10.5" ry="6" transform="rotate(-15 12 8.8)" fill="#f5f5f5" stroke="#d83a44" strokeWidth="1.6" />
            <path d="M12 6 L17 17 M18 7 L12 18" stroke="#8b8f96" strokeWidth="1.3" />
            <ellipse cx="14.5" cy="20" rx="1.6" ry="2.6" stroke="#1c8ac9" strokeWidth="1.7" />
            <ellipse cx="20" cy="17.3" rx="2.8" ry="1.8" transform="rotate(25 20 17.3)" stroke="#1c8ac9" strokeWidth="1.7" />
            <path d="M14 17.5 L18 15.8" stroke="#1c8ac9" strokeWidth="1.8" />
          </Svg>
        </Task>
        <Task active>
          <ChromeLogo />
        </Task>
        <Task>
          <Svg s={24} box="0 0 24 24">
            <rect x=".5" y="2.5" width="22" height="18" fill="#050505" stroke="#9c9fa4" />
            <rect x="1" y="3" width="21" height="2.4" fill="#d5d9de" />
            <path d="M6.5 8 H4.5 V11.5 H6.5 M8.5 8.5 V9.5 M8.5 10.5 V11.5 M10 7.5 L11.5 11.5 M12.5 8 V11 M14 11.5 H19" stroke="#e5e5e5" strokeWidth="1" />
          </Svg>
        </Task>
        <Task open>
          <Svg s={24} box="0 0 24 24">
            <path d="M1 4 H8.5 L10.5 5.8 H21 V21 H1Z" fill="#f5cf6b" />
            <path d="M3 7.5 H22.5 V21 H1.5Z" fill="#ffe9a2" />
            <path d="M5 14 Q5 12.5 7 12.5 H16.5 Q18.5 12.5 18.5 14 V21.5 H14.5 V17.6 H9 V21.5 H5Z" fill="#35b1e8" />
          </Svg>
        </Task>
        <Task open>
          <Svg s={24} box="0 0 24 24">
            <rect x="2.5" y="2" width="18" height="21" fill="#f2f3ee" stroke="#8f9389" />
            <path d="M3 15 Q10 17 20 12 V22.5 H3Z" fill="#8edb2a" />
            <path d="M3.5 2 H20" stroke="#555" strokeDasharray="1.2 1" />
            <path d="M6.4 13 V8 H8.6 V13 M11.5 8.5 V12 M10 10.2 H13 M14.8 8.5 V12" stroke="#222" strokeWidth="1.2" />
            <path d="M13 17 L14 13 L21.5 1.8 L23.5 3.2 L16 14.6Z" fill="#f6b62b" stroke="#9c6b14" strokeWidth=".5" />
          </Svg>
        </Task>
        <Task>
          <Svg s={24} box="0 0 24 24">
            <rect x="11.5" y="1.5" width="9.5" height="8" fill="#1212d8" stroke="#d6d6d6" strokeWidth="1.6" />
            <path d="M10 11.5 H22.5 L21 14 H10Z" fill="#c4c4c4" />
            <rect x="3" y="11.5" width="9.5" height="8" fill="#1212d8" stroke="#d6d6d6" strokeWidth="1.6" />
            <path d="M1.5 20.5 H14 V23 H1.5Z" fill="#d5d5d5" />
            <path d="M6.5 15.5 L11.5 9 L13 11 L18.5 6.5 L13.2 13.6 L11.7 11.8Z" fill="#ffee1a" stroke="#e7d200" strokeWidth=".8" />
          </Svg>
        </Task>
        <Task open>
          <Svg s={24} box="0 0 24 24">
            <path d="M1 .8 H11.5 L15.5 5 V23 H1Z" fill="#eeeeea" />
            <path d="M11.5 .8 V5 H15.5" fill="#c9c9c4" />
            <path d="M3 1 V23" stroke="#777" strokeDasharray="1.2 1.2" />
            <path d="M5 5 H10 M5 8 H12 M5 11 H9 M5 14 H8" stroke="#a4a4a4" />
            <path d="M16.5 8 Q12.5 8 12.5 10.5 V12.5 H17 V13.4 H10.5 Q8.2 14 8.5 16.6 Q8.6 19.6 11 19.6 H12.4 V17.4 Q12.5 15.6 14.8 15.6 H18 Q20 15.4 20 13.5 V10.5 Q20 8 16.5 8Z" fill="#3c78aa" />
            <path d="M16.8 24 Q20.8 24 20.8 21.4 V19.4 H16.4 V18.6 H22 Q24 18 24 15.6 Q24 12.9 22 12.7 H21 V14.8 Q20.8 16.6 18.6 16.6 H15.4 Q13.3 16.8 13.3 18.8 V21.4 Q13.3 24 16.8 24Z" fill="#fdd43c" />
          </Svg>
        </Task>
        <Task open>
          <Svg s={24} box="0 0 24 24">
            <circle cx="12.5" cy="11.5" r="10.7" fill="#ef5b25" />
            <path d="M2 22.6 L2.6 19 L6 22Z" fill="#ef5b25" />
            <circle cx="16.2" cy="6.4" r="3.1" stroke="#f6e8e0" strokeWidth="1.5" />
            <path d="M14 8 L9.5 12.6 L6 18 M16.6 9.6 L12 15 L6 18 L10 11.6" stroke="#f6e8e0" strokeWidth="1.4" />
          </Svg>
        </Task>
        <Task open>
          <ChromeLogo />
        </Task>
      </div>
      <div className="ml-auto flex items-center text-[11.3px] leading-[17px]">
        <Svg s={12} box="0 0 12 12">
          <path d="M.5 8.5 L6 3 L11.5 8.5" stroke="#fff" strokeWidth="1.3" />
        </Svg>
        <div className="ml-[11px]">
          <Svg s={15} box="0 0 15 15">
            <path d="M.5 3.5 H12.5 V11.5 H.5Z M14.2 6 V9" stroke="#fff" />
            <rect x="2" y="5" width="4.5" height="5" fill="#fff" />
          </Svg>
        </div>
        <div className="ml-[10px] pt-px">
          <Svg s={13} box="0 0 13 13">
            <path d="M.7 12 A11 11 0 0 1 12 1.5 M3.8 12.2 A8 8 0 0 1 12.2 4.6 M6.8 12.4 A5.2 5.2 0 0 1 12.2 7.6" stroke="#d4d8de" strokeWidth="1.1" />
            <circle cx="11" cy="11" r="1.6" fill="#fff" />
          </Svg>
        </div>
        <div className="ml-[8px] w-[26px] text-center">
          <div>ENG</div>
          <div>INTL</div>
        </div>
        <div className="ml-[10px] w-[62px] whitespace-nowrap text-center">
          <div>04:14</div>
          <div>05-12-2019</div>
        </div>
        <div className="ml-[17px] pt-[2px]">
          <Svg s={24} box="0 0 24 24">
            <path d="M0 2 H16 V15 H7.5 L3.5 19 V15 H0Z" fill="#fff" />
            <path d="M3 5.5 H13 M3 8.5 H13 M3 11.5 H10" stroke="#0c1730" />
            <circle cx="16" cy="16" r="7.8" fill="#2a2d33" stroke="#777b82" strokeWidth=".8" />
            <text x="12.8" y="20.3" fontSize="12" fontWeight="600" fill="#fff" fontFamily="Open Sans, sans-serif">
              1
            </text>
          </Svg>
        </div>
        <div className="ml-[11px] mr-1 h-10 w-px bg-[#5a6375]" />
      </div>
    </div>
  );
}

export default function App() {
  return (
    <div className="h-[768px] w-[1366px] overflow-hidden font-['Open_Sans','Noto_Sans',sans-serif]">
      <TabStrip />
      <Toolbar />
      <Page />
      <Taskbar />
    </div>
  );
}
